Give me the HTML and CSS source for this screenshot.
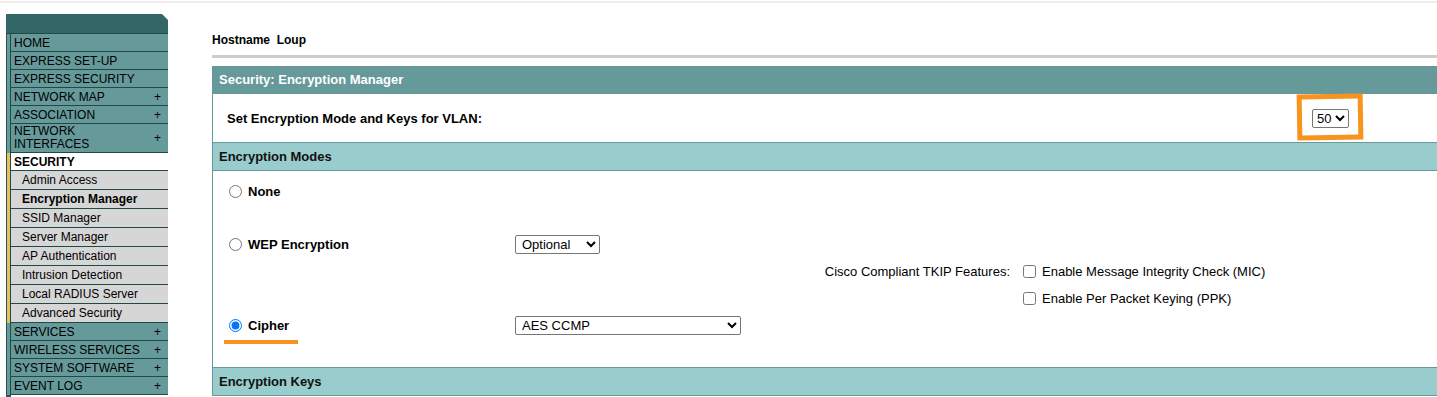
FILE: index.html
```html
<!DOCTYPE html>
<html lang="en">
<head>
    <meta charset="UTF-8">
    <meta name="viewport" content="width=device-width, initial-scale=1.0">
    <title>Security: Encryption Manager</title>
    <link rel="stylesheet" href="styles.css">
</head>
<body>
    <div class="topline"></div>
    <div class="page">
        <!-- menu lateral -->
        <div class="nav">
            <div class="nav-head"></div>
            <div class="nav-item"><span class="label">HOME</span></div>
            <div class="nav-item"><span class="label">EXPRESS SET-UP</span></div>
            <div class="nav-item"><span class="label">EXPRESS SECURITY</span></div>
            <div class="nav-item"><span class="label">NETWORK MAP <i>+</i></span></div>
            <div class="nav-item"><span class="label">ASSOCIATION <i>+</i></span></div>
            <div class="nav-item tall"><span class="label"><b class="two">NETWORK<br>INTERFACES</b> <i>+</i></span></div>
            <div class="nav-item open"><span class="label">SECURITY</span></div>
            <div class="nav-item sub"><span class="label">Admin Access</span></div>
            <div class="nav-item sub current"><span class="label">Encryption Manager</span></div>
            <div class="nav-item sub"><span class="label">SSID Manager</span></div>
            <div class="nav-item sub"><span class="label">Server Manager</span></div>
            <div class="nav-item sub"><span class="label">AP Authentication</span></div>
            <div class="nav-item sub"><span class="label">Intrusion Detection</span></div>
            <div class="nav-item sub"><span class="label">Local RADIUS Server</span></div>
            <div class="nav-item sub"><span class="label">Advanced Security</span></div>
            <div class="nav-item"><span class="label">SERVICES <i>+</i></span></div>
            <div class="nav-item"><span class="label">WIRELESS SERVICES <i>+</i></span></div>
            <div class="nav-item"><span class="label">SYSTEM SOFTWARE <i>+</i></span></div>
            <div class="nav-item"><span class="label">EVENT LOG <i>+</i></span></div>
            <div class="nav-foot"></div>
        </div>

        <div class="main">
            <div class="hostname">Hostname&nbsp;&nbsp;Loup</div>
            <div class="rule"></div>

            <div class="title">Security: Encryption Manager</div>
            <div class="panel">
                <div class="vlan-row">
                    <span>Set Encryption Mode and Keys for VLAN:</span>
                    <span class="mark-box">
                        <select class="sel-vlan"><option>50</option></select>
                    </span>
                </div>

                <div class="band">Encryption Modes</div>
                <div class="modes">
                    <label class="opt r1"><input type="radio" name="mode"> None</label>

                    <label class="opt r3"><input type="radio" name="mode"> WEP Encryption</label>
                    <div class="c2 r3"><select class="sel-wep"><option>Optional</option></select></div>

                    <div class="tkip r4">Cisco Compliant TKIP Features:</div>
                    <label class="chk r4"><input type="checkbox"> Enable Message Integrity Check (MIC)</label>
                    <label class="chk r5"><input type="checkbox"> Enable Per Packet Keying (PPK)</label>

                    <label class="opt r6 underline"><input type="radio" name="mode" checked> Cipher</label>
                    <div class="c2 r6"><select class="sel-cipher"><option>AES CCMP</option></select></div>
                </div>

                <div class="band">Encryption Keys</div>
            </div>
        </div>
    </div>
</body>
</html>
```

FILE: styles.css
```css
* {
    box-sizing: border-box;
}
html, body {
    margin: 0;
    padding: 0;
}
body {
    font-family: "Liberation Sans", Arial, sans-serif;
    color: #000;
    background: #fff;
    overflow: hidden;
}
.topline {
    height: 2px;
    margin-top: 1px;
    background: #eeeeee;
}
.page {
    display: flex;
    align-items: flex-start;
}

/* menu */
.nav {
    width: 162px;
    margin-left: 6px;
    margin-top: 11px;
    font-size: 12px;
}
.nav-head {
    height: 20px;
    background: #336666;
    border-bottom: 1px solid #1f4a47;
    clip-path: polygon(0 0, calc(100% - 6px) 0, 100% 6px, 100% 100%, 0 100%);
}
.nav-item {
    display: flex;
    border-left: 1px solid #2a5754;
    background: #669999;
}
.nav-item::before {
    content: "";
    width: 3px;
    background: #669999;
}
.nav-item .label {
    flex: 1;
    display: flex;
    justify-content: space-between;
    align-items: center;
    height: 18px;
    padding: 0 7px 0 3px;
    border-left: 1px solid #1f4a47;
    border-bottom: 1px solid #1f4a47;
    white-space: nowrap;
}
.nav-item i {
    font-style: normal;
}
.nav-item.tall .label {
    height: 29px;
}
.nav-item .two {
    font-weight: normal;
    line-height: 13px;
    padding-top: 1px;
    align-self: flex-start;
}
.nav-item.open,
.nav-item.sub {
    background: #d6d6d6;
}
.nav-item.open::before,
.nav-item.sub::before {
    background: #e6c25e;
}
.nav-item.open .label {
    background: #fff;
    font-weight: bold;
}
.nav-item.sub .label {
    height: 19px;
    padding-left: 11px;
}
.nav-item.current .label {
    font-weight: bold;
}
.nav-foot {
    height: 6px;
    width: 5px;
    background: #2a5754;
}

/* conteudo */
.main {
    flex: 1;
    margin-left: 44px;
    margin-top: 30px;
}
.hostname {
    font-size: 12px;
    font-weight: bold;
    line-height: 14px;
}
.rule {
    height: 3px;
    margin-top: 8px;
    background: #cccccc;
}
.title {
    margin-top: 8px;
    height: 28px;
    line-height: 28px;
    padding-left: 7px;
    background: #669999;
    color: #fff;
    font-size: 13px;
    font-weight: bold;
}
.panel {
    border-left: 1px solid #669999;
    font-size: 13px;
}
.vlan-row {
    height: 48px;
    display: flex;
    align-items: center;
    justify-content: space-between;
    padding: 0 88px 0 14px;
    font-weight: bold;
}
.band {
    height: 29px;
    line-height: 27px;
    padding-left: 6px;
    background: #99cccc;
    border-top: 1px solid #669999;
    border-bottom: 1px solid #669999;
    font-weight: bold;
    color: #111;
}

select {
    font-family: "Liberation Sans", Arial, sans-serif;
    font-size: 13px;
    height: 19px;
    margin: 0;
    padding: 0 0 0 2px;
    color: #000;
    background: #fff;
    border: 1px solid #767676;
    border-radius: 2px;
}
.sel-vlan {
    width: 37px;
    padding: 0;
}
.sel-wep {
    width: 85px;
}
.sel-cipher {
    width: 226px;
}

/* marcacoes laranja */
.mark-box {
    position: relative;
    display: inline-flex;
}
.mark-box::after {
    content: "";
    position: absolute;
    top: -15px;
    left: -15px;
    right: -14px;
    bottom: -12px;
    border: 5px solid #f7931e;
    transform: rotate(-1deg);
}

.modes {
    display: grid;
    grid-template-columns: 302px 504px 1fr;
    grid-template-rows: 40px 20px 26px 28px 26px 28px;
    padding-bottom: 28px;
    align-items: center;
}
.opt {
    grid-column: 1;
    display: flex;
    align-items: center;
    justify-self: start;
    margin-left: 11px;
    height: 16px;
    font-weight: bold;
    position: relative;
}
.opt input {
    margin: 0 6px 0 5px;
    width: 13px;
    height: 13px;
}
.c2 {
    grid-column: 2;
    display: flex;
}
.tkip {
    grid-column: 1 / 3;
    text-align: right;
    padding-right: 9px;
}
.chk {
    grid-column: 3;
    display: flex;
    align-items: center;
}
.chk input {
    margin: 0 6px 0 4px;
    width: 13px;
    height: 13px;
}
.r1 { grid-row: 1; }
.r3 { grid-row: 3; }
.r4 { grid-row: 4; }
.r5 { grid-row: 5; }
.r6 { grid-row: 6; }

.underline::after {
    content: "";
    position: absolute;
    left: 0;
    top: 23px;
    width: 74px;
    height: 4px;
    background: #f7931e;
}
```
